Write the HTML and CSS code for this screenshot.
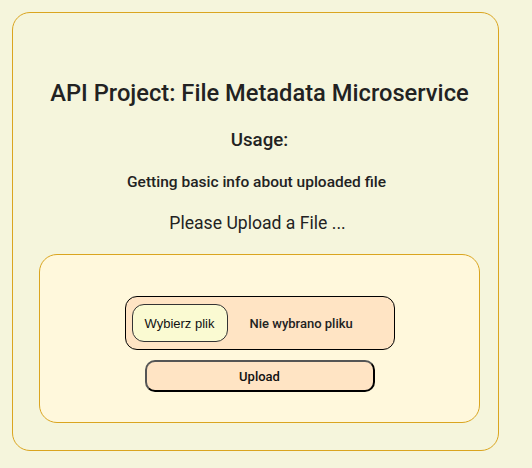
FILE: index.html
```html
<!DOCTYPE html>
<html>
<head>
<meta charset="utf-8">
<link rel="stylesheet" href="styles.css">
</head>
<body>
<div class="card">
  <h1 class="title">API Project: File Metadata Microservice</h1>
  <h3 class="usage">Usage:</h3>
  <h4 class="info">Getting basic info about uploaded file</h4>
  <p class="please">Please Upload a File ...</p>
  <div class="upload-box">
    <div class="file-input">
      <span class="choose">Wybierz plik</span>
      <span class="none">Nie wybrano pliku</span>
    </div>
    <div class="upload-btn">Upload</div>
  </div>
</div>
</body>
</html>
```
FILE: styles.css
```css
html, body {
  margin: 0;
  padding: 0;
  background: #f5f5dc;
}
body {
  padding: 12px;
  font-family: Roboto, "Liberation Sans", sans-serif;
  color: #222;
}
.card {
  box-sizing: border-box;
  width: 487px;
  height: 439px;
  border: 1px solid #daa520;
  border-radius: 18px;
  padding: 0 18px 0 26px;
  display: flex;
  flex-direction: column;
  align-items: center;
}
.title {
  margin: 65px 0 0;
  font-size: 23.7px;
  font-weight: 500;
  line-height: 30px;
}
.usage {
  margin: 21px 0 0;
  font-size: 18.7px;
  font-weight: 500;
  line-height: 22px;
}
.info {
  margin: 21px 6px 0 0;
  font-size: 15.5px;
  font-weight: 500;
  line-height: 20px;
}
.please {
  margin: 20px 4px 0 0;
  font-size: 17.6px;
  font-weight: 400;
  line-height: 22px;
}
.upload-box {
  box-sizing: border-box;
  margin-top: 20px;
  width: 100%;
  height: 169px;
  background: #fff8dc;
  border: 1px solid #daa520;
  border-radius: 18px;
  display: flex;
  flex-direction: column;
  align-items: center;
  padding-top: 41px;
}
.file-input {
  box-sizing: border-box;
  width: 270px;
  height: 54px;
  background: #ffe4c4;
  border: 1px solid #000;
  border-radius: 12px;
  display: flex;
  align-items: center;
  padding-left: 6px;
}
.choose {
  box-sizing: border-box;
  width: 96px;
  height: 38px;
  background: #fafad2;
  border: 1px solid #333;
  border-radius: 12px;
  display: flex;
  align-items: center;
  justify-content: center;
  font-family: "Liberation Sans", Arial, sans-serif;
  font-size: 13px;
  color: #111;
}
.none {
  margin-left: 22px;
  font-size: 13px;
  font-weight: 500;
  color: #222;
}
.upload-btn {
  box-sizing: border-box;
  margin-top: 10px;
  width: 230px;
  height: 32px;
  background: #ffe4c4;
  border: 2px solid;
  border-color: #555 #000 #000 #555;
  border-radius: 10px;
  display: flex;
  align-items: center;
  justify-content: center;
  font-size: 13px;
  font-weight: 500;
  color: #111;
}
```
